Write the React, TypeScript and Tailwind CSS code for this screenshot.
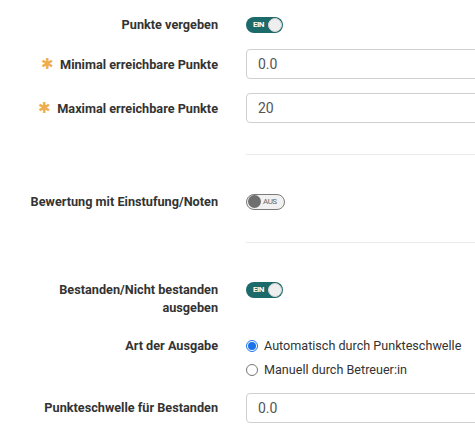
import React from "react";

const font = { fontFamily: "Roboto, 'Liberation Sans', sans-serif" };

function ToggleOn() {
  return (
    <div className="relative flex h-[16px] w-[37px] items-center rounded-full bg-[#1c6a69]">
      <span className="ml-[7px] text-[8px] font-bold leading-none tracking-[-0.5px] text-white">EIN</span>
      <span className="absolute right-[1px] top-[1px] h-[14px] w-[14px] rounded-full border border-[#d5d5d5] bg-[#eeeeee]" />
    </div>
  );
}

function ToggleOff() {
  return (
    <div className="relative flex h-[16px] w-[39px] items-center rounded-full border border-[#7a7a7a] bg-[#f1f1f1]">
      <span className="absolute left-[1px] top-[0px] h-[13px] w-[13px] rounded-full bg-[#6f6f6f]" />
      <span className="ml-[16px] text-[8px] leading-none tracking-[-0.5px] text-[#666]">AUS</span>
    </div>
  );
}

function Input({ value }: { value: string }) {
  return (
    <div className="flex h-[30px] w-[300px] items-center rounded-[4px] border border-[#cfcfcf] bg-white pl-[11px] text-[14px] text-[#555]">
      {value}
    </div>
  );
}

function Label({ children, required }: { children: React.ReactNode; required?: boolean }) {
  return (
    <div className="w-[218px] shrink-0 pl-[15px] text-right text-[12.7px] font-bold leading-[18px] text-[#333]">
      {required && <span className="mr-[6px] text-[15px] font-normal text-[#f0ad4e]">✱</span>}
      {children}
    </div>
  );
}

function Radio({ checked, label }: { checked?: boolean; label: string }) {
  return (
    <div className="flex h-[24px] items-center">
      {checked ? (
        <span className="flex h-[12px] w-[12px] items-center justify-center rounded-full border border-[#1a73e8] bg-white">
          <span className="h-[8px] w-[8px] rounded-full bg-[#1a73e8]" />
        </span>
      ) : (
        <span className="h-[12px] w-[12px] rounded-full border border-[#767676] bg-white" />
      )}
      <span className="ml-[6px] text-[12.6px] text-[#333]">{label}</span>
    </div>
  );
}

export default function App() {
  return (
    <div className="h-[435px] w-[475px] overflow-hidden bg-white" style={font}>
      <div className="pt-[12px]">
        <div className="flex h-[26px] items-center">
          <Label>Punkte vergeben</Label>
          <div className="ml-[28px]"><ToggleOn /></div>
        </div>
        <div className="mt-[11px] flex items-center">
          <Label required>Minimal erreichbare Punkte</Label>
          <div className="ml-[28px]"><Input value="0.0" /></div>
        </div>
        <div className="mt-[14px] flex items-center">
          <Label required>Maximal erreichbare Punkte</Label>
          <div className="ml-[28px]"><Input value="20" /></div>
        </div>
        <div className="ml-[246px] mt-[31px] border-t border-[#ececec]" />
        <div className="mt-[37px] flex h-[20px] items-center">
          <Label>Bewertung mit Einstufung/Noten</Label>
          <div className="ml-[28px]"><ToggleOff /></div>
        </div>
        <div className="ml-[246px] mt-[30px] border-t border-[#ececec]" />
        <div className="mt-[38px] flex items-start">
          <Label>Bestanden/Nicht bestanden ausgeben</Label>
          <div className="ml-[28px] pt-[1px]"><ToggleOn /></div>
        </div>
        <div className="mt-[17px] flex items-start">
          <div className="w-[218px] shrink-0 pl-[15px] text-right text-[12.7px] font-bold leading-[24px] text-[#333]">
            Art der Ausgabe
          </div>
          <div className="ml-[28px] flex flex-col">
            <Radio checked label="Automatisch durch Punkteschwelle" />
            <Radio label="Manuell durch Betreuer:in" />
          </div>
        </div>
        <div className="mt-[11px] flex items-center">
          <Label>Punkteschwelle für Bestanden</Label>
          <div className="ml-[28px]"><Input value="0.0" /></div>
        </div>
      </div>
    </div>
  );
}
